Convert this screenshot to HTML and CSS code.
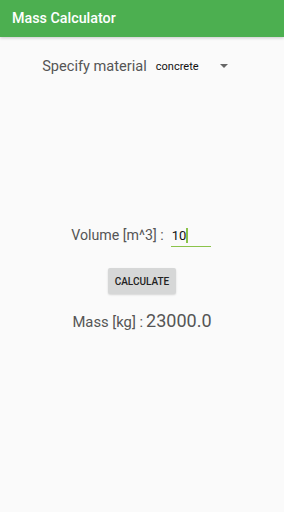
FILE: index.html
```html
<!DOCTYPE html>
<html lang="en">
<head>
    <meta charset="UTF-8">
    <meta name="viewport" content="width=device-width, initial-scale=1.0">
    <title>Mass Calculator</title>
    <link rel="stylesheet" href="styles.css">
</head>
<body>
    <div class="app-bar">Mass Calculator</div>
    <div class="content">
        <div class="material-row">
            <span class="label big">Specify material</span>
            <div class="spinner">
                <span class="spinner-text">concrete</span>
                <svg class="arrow" width="8" height="4" viewBox="0 0 8 4"><path d="M0 0 L8 0 L4 4 Z" fill="#666"/></svg>
            </div>
        </div>
        <div class="volume-row">
            <span class="label">Volume [m^3] :</span>
            <div class="input">10<span class="cursor"></span></div>
        </div>
        <button class="calc">CALCULATE</button>
        <div class="result">
            <span class="label">Mass [kg] :</span>
            <span class="value">23000.0</span>
        </div>
    </div>
</body>
</html>
```

FILE: styles.css
```css
body {
    margin: 0;
    background: #fafafa;
    font-family: Roboto, 'Noto Sans', sans-serif;
    width: 284px;
    height: 512px;
}

.app-bar {
    background: #4caf50;
    height: 37px;
    box-sizing: border-box;
    padding: 10px 0 0 12px;
    color: white;
    font-size: 14.3px;
    font-weight: 500;
    box-shadow: 0 1px 3px rgba(0, 0, 0, 0.2);
}

.content {
    display: flex;
    flex-direction: column;
    align-items: center;
}

.label {
    color: #555;
    font-size: 14.2px;
}

.label.big {
    font-size: 14.6px;
}

.material-row {
    display: flex;
    align-items: center;
    margin-top: 20px;
    margin-left: -14px;
}

.spinner {
    display: flex;
    align-items: center;
    margin-left: 9px;
    width: 72px;
    justify-content: space-between;
}

.spinner-text {
    font-size: 11px;
    color: #111;
}

.volume-row {
    display: flex;
    align-items: flex-start;
    margin-top: 151px;
    margin-left: -2px;
}

.volume-row .label {
    margin-top: 1px;
}

.input {
    margin-left: 7px;
    width: 39px;
    height: 18px;
    border-bottom: 1.5px solid #8bc34a;
    font-size: 13px;
    color: #111;
    display: flex;
    align-items: flex-start;
    padding-left: 1px;
    padding-top: 2px;
}

.cursor {
    width: 1.5px;
    height: 15px;
    background: #8bc34a;
}

.calc {
    margin-top: 21px;
    width: 68px;
    height: 26px;
    background: #d6d7d7;
    border: none;
    border-radius: 2px;
    font-family: Roboto, sans-serif;
    font-size: 10px;
    font-weight: 500;
    color: #222;
    padding: 0;
    box-shadow: 0 1px 2px rgba(0, 0, 0, 0.15);
}

.result {
    display: flex;
    align-items: baseline;
    margin-top: 16px;
}

.result .label {
    font-size: 14.8px;
}

.value {
    font-size: 18px;
    color: #555;
    margin-left: 3px;
}
```
